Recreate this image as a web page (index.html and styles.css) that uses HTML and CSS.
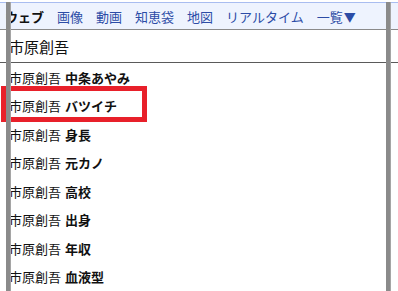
FILE: index.html
```html
<!DOCTYPE html>
<html lang="ja">
<head>
    <meta charset="UTF-8">
    <meta name="viewport" content="width=device-width, initial-scale=1.0">
    <title>市原創吾 - 検索</title>
    <link rel="stylesheet" href="styles.css">
</head>
<body>
    <div class="page">
        <div class="tabs">
            <span class="tab current">ウェブ</span>
            <a class="tab" href="#">画像</a>
            <a class="tab" href="#">動画</a>
            <a class="tab" href="#">知恵袋</a>
            <a class="tab" href="#">地図</a>
            <a class="tab" href="#">リアルタイム</a>
            <a class="tab" href="#">一覧<span class="arrow">▼</span></a>
        </div>

        <div class="query">市原創吾</div>

        <ul class="suggest">
            <li>市原創吾 <b>中条あやみ</b></li>
            <li>市原創吾 <b>バツイチ</b></li>
            <li>市原創吾 <b>身長</b></li>
            <li>市原創吾 <b>元カノ</b></li>
            <li>市原創吾 <b>高校</b></li>
            <li>市原創吾 <b>出身</b></li>
            <li>市原創吾 <b>年収</b></li>
            <li>市原創吾 <b>血液型</b></li>
        </ul>

        <div class="mark"></div>
        <div class="edge left"></div>
        <div class="edge right"></div>
    </div>
</body>
</html>
```

FILE: styles.css
```css
html, body {
    margin: 0;
    padding: 0;
    background: #fff;
    overflow: hidden;
}
body {
    font-family: "Noto Sans CJK JP", "Noto Sans", sans-serif;
    color: #111;
}
.page {
    position: relative;
    width: 398px;
    height: 291px;
}
.tabs {
    display: flex;
    align-items: center;
    gap: 13px;
    height: 26px;
    margin-top: 2px;
    padding-left: 5px;
    background: #eef3fe;
    border-top: 1px solid #a9bdf0;
    border-bottom: 1px solid #8a8a8a;
    font-size: 13px;
}
.tab {
    color: #2c4ca6;
    text-decoration: none;
    white-space: nowrap;
}
.tab.current {
    color: #111;
    font-weight: bold;
}
.arrow {
    font-size: 12px;
    margin-left: 1px;
}
.query {
    display: flex;
    align-items: center;
    height: 32px;
    padding-left: 9px;
    font-size: 15px;
    border-bottom: 1px solid #5a5a5a;
}
.suggest {
    list-style: none;
    margin: 0;
    padding: 0;
}
.suggest li {
    display: flex;
    align-items: center;
    gap: 4px;
    height: 28.5px;
    padding-left: 9px;
    font-size: 13px;
    white-space: nowrap;
}
.suggest b {
    font-weight: bold;
}
.mark {
    position: absolute;
    left: 1px;
    top: 84px;
    width: 136px;
    height: 26px;
    border: 5px solid #e8202a;
}
.edge {
    position: absolute;
    top: 0;
    width: 4px;
    height: 291px;
    background: #8a8a8a;
    border-right: 1px solid #a5a5a5;
}
.edge.left {
    left: 6px;
}
.edge.right {
    left: 386px;
}
```
